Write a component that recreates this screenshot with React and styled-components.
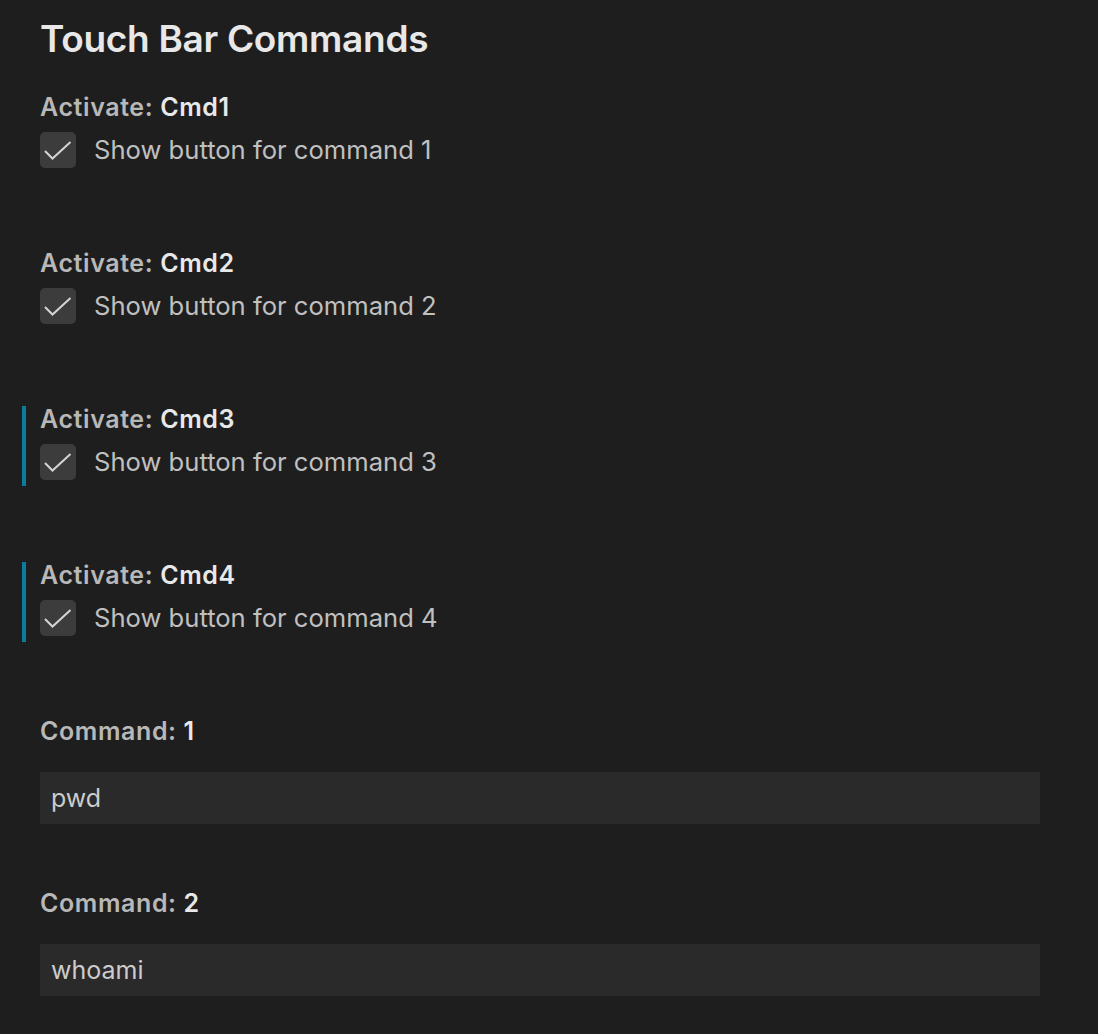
import React from "react";
import styled, { createGlobalStyle } from "styled-components";

const GlobalStyle = createGlobalStyle`
  html, body {
    margin: 0;
    padding: 0;
    background: #1e1e1e;
  }
  body {
    font-family: Inter, "Noto Sans", "Liberation Sans", sans-serif;
  }
`;

const toggles = [
  { name: "Cmd1", text: "Show button for command 1", modified: false },
  { name: "Cmd2", text: "Show button for command 2", modified: false },
  { name: "Cmd3", text: "Show button for command 3", modified: true },
  { name: "Cmd4", text: "Show button for command 4", modified: true },
];

const commands = [
  { name: "1", value: "pwd" },
  { name: "2", value: "whoami" },
];

function CheckIcon() {
  return (
    <svg width="36" height="36" viewBox="0 0 36 36">
      <polyline
        points="5,19 12.5,26.5 30.5,10"
        fill="none"
        stroke="#d4d4d4"
        strokeWidth="2"
        strokeLinejoin="miter"
      />
    </svg>
  );
}

function App() {
  return (
    <Page>
      <GlobalStyle />
      <Title>Touch Bar Commands</Title>
      {toggles.map((t) => (
        <ToggleItem key={t.name} modified={t.modified}>
          <Label>
            Activate: <strong>{t.name}</strong>
          </Label>
          <CheckRow>
            <CheckBox>
              <CheckIcon />
            </CheckBox>
            <Description>{t.text}</Description>
          </CheckRow>
        </ToggleItem>
      ))}
      {commands.map((c) => (
        <CommandItem key={c.name}>
          <Label>
            Command: <strong>{c.name}</strong>
          </Label>
          <TextInput defaultValue={c.value} spellCheck={false} />
        </CommandItem>
      ))}
    </Page>
  );
}

export default App;

const Page = styled.div`
  display: flex;
  flex-direction: column;
  padding: 14px 58px 0 40px;
`;

const Title = styled.h1`
  margin: 0 0 30px;
  font-size: 37px;
  line-height: 50px;
  font-weight: 600;
  color: #e8e8e8;
  letter-spacing: -0.3px;
`;

const ToggleItem = styled.div`
  position: relative;
  display: flex;
  flex-direction: column;
  gap: 12px;
  padding-bottom: 6px;
  margin-bottom: 76px;

  &::before {
    content: "";
    display: ${(p) => (p.modified ? "block" : "none")};
    position: absolute;
    left: -18px;
    top: 0;
    bottom: 0;
    width: 4px;
    background: #0c7d9d;
  }
`;

const Label = styled.div`
  font-size: 25px;
  line-height: 26px;
  font-weight: 600;
  letter-spacing: 0.6px;
  color: #b8b8b8;

  strong {
    font-weight: 600;
    color: #e8e8e8;
  }
`;

const CheckRow = styled.div`
  display: flex;
  align-items: center;
  gap: 18px;
`;

const CheckBox = styled.div`
  width: 36px;
  height: 36px;
  border-radius: 5px;
  background: #3c3c3c;
  display: flex;
  align-items: center;
  justify-content: center;
  flex-shrink: 0;
`;

const Description = styled.div`
  font-size: 25.6px;
  line-height: 36px;
  color: #c0c0c0;
`;

const CommandItem = styled.div`
  display: flex;
  flex-direction: column;
  gap: 28px;
  margin-bottom: 66px;
`;

const TextInput = styled.input`
  box-sizing: border-box;
  width: 1000px;
  height: 52px;
  border: none;
  outline: none;
  background: #2a2a2a;
  color: #cccccc;
  font-family: inherit;
  font-size: 25px;
  padding: 0 11px;
`;
